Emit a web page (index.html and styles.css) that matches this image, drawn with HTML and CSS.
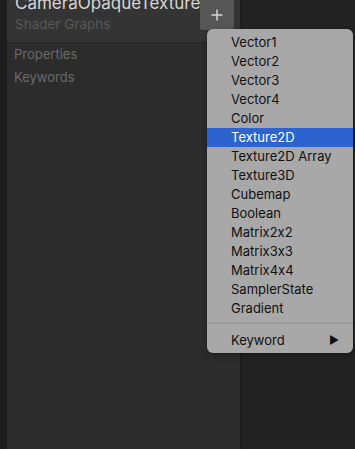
FILE: index.html
```html
<!DOCTYPE html>
<html lang="en">
<head>
  <meta charset="UTF-8">
  <title>Blackboard</title>
  <link rel="stylesheet" href="styles.css">
</head>
<body>
  <div class="app">
    <div class="gutter"></div>

    <!-- Blackboard panel -->
    <div class="panel">
      <div class="header">
        <div class="titles">
          <div class="title">CameraOpaqueTexture</div>
          <div class="subtitle">Shader Graphs</div>
        </div>
        <button class="add-btn">
          <svg width="12" height="12" viewBox="0 0 12 12">
            <path d="M6 0.5V11.5M0.5 6H11.5" stroke="#d8d8d8" stroke-width="1.5" fill="none"/>
          </svg>
        </button>
      </div>
      <div class="section-row">Properties</div>
      <div class="section-row">Keywords</div>
    </div>

    <div class="canvas"></div>
  </div>

  <!-- Add menu -->
  <div class="menu">
    <div class="menu-item">Vector1</div>
    <div class="menu-item">Vector2</div>
    <div class="menu-item">Vector3</div>
    <div class="menu-item">Vector4</div>
    <div class="menu-item">Color</div>
    <div class="menu-item selected">Texture2D</div>
    <div class="menu-item">Texture2D Array</div>
    <div class="menu-item">Texture3D</div>
    <div class="menu-item">Cubemap</div>
    <div class="menu-item">Boolean</div>
    <div class="menu-item">Matrix2x2</div>
    <div class="menu-item">Matrix3x3</div>
    <div class="menu-item">Matrix4x4</div>
    <div class="menu-item">SamplerState</div>
    <div class="menu-item">Gradient</div>
    <div class="menu-sep"></div>
    <div class="menu-item submenu">Keyword <span class="arrow">&#9654;</span></div>
  </div>
</body>
</html>
```

FILE: styles.css
```css
body {
  margin: 0;
  width: 355px;
  height: 449px;
  overflow: hidden;
  background: #222222;
  font-family: Inter, "Noto Sans", sans-serif;
  font-feature-settings: "calt" 0;
  position: relative;
}
.app {
  display: flex;
  height: 449px;
}
.gutter {
  width: 7px;
  background: #1d1d1d;
}
.panel {
  width: 233px;
  background: #2c2c2c;
  border-right: 1px solid #1b1b1b;
}
.header {
  display: flex;
  height: 42px;
  background: #343434;
  border-bottom: 1px solid #232323;
}
.titles {
  flex: 1;
  padding-left: 8px;
  overflow: hidden;
}
.title {
  margin-top: -7px;
  font-size: 17px;
  line-height: 20px;
  color: #d6d6d6;
  white-space: nowrap;
}
.subtitle {
  margin-top: 3px;
  font-size: 13.5px;
  line-height: 16px;
  color: #575757;
}
.add-btn {
  width: 34px;
  height: 30px;
  margin-right: 6px;
  padding: 0;
  border: none;
  border-radius: 0 0 3px 3px;
  background: #575757;
  display: flex;
  align-items: center;
  justify-content: center;
}
.section-row {
  padding-left: 7px;
  height: 23px;
  font-size: 13px;
  line-height: 23px;
  color: #6a6a6a;
}
.canvas {
  flex: 1;
  background: #222222;
}
.menu {
  position: absolute;
  left: 207px;
  top: 29px;
  width: 146px;
  height: 324px;
  box-sizing: border-box;
  padding-top: 4px;
  background: #a8a8a8;
  border-radius: 6px;
  box-shadow: 0 2px 6px rgba(0, 0, 0, 0.35);
}
.menu-item {
  height: 19px;
  line-height: 19px;
  padding-left: 24px;
  font-size: 13px;
  color: #111111;
  white-space: nowrap;
}
.menu-item.selected {
  background: #2c63cf;
  color: #ffffff;
}
.menu-sep {
  height: 2px;
  margin: 4px 0 7px;
  background: #9a9a9a;
}
.submenu {
  display: flex;
  justify-content: space-between;
  padding-right: 14px;
}
.arrow {
  font-size: 11px;
}
```
